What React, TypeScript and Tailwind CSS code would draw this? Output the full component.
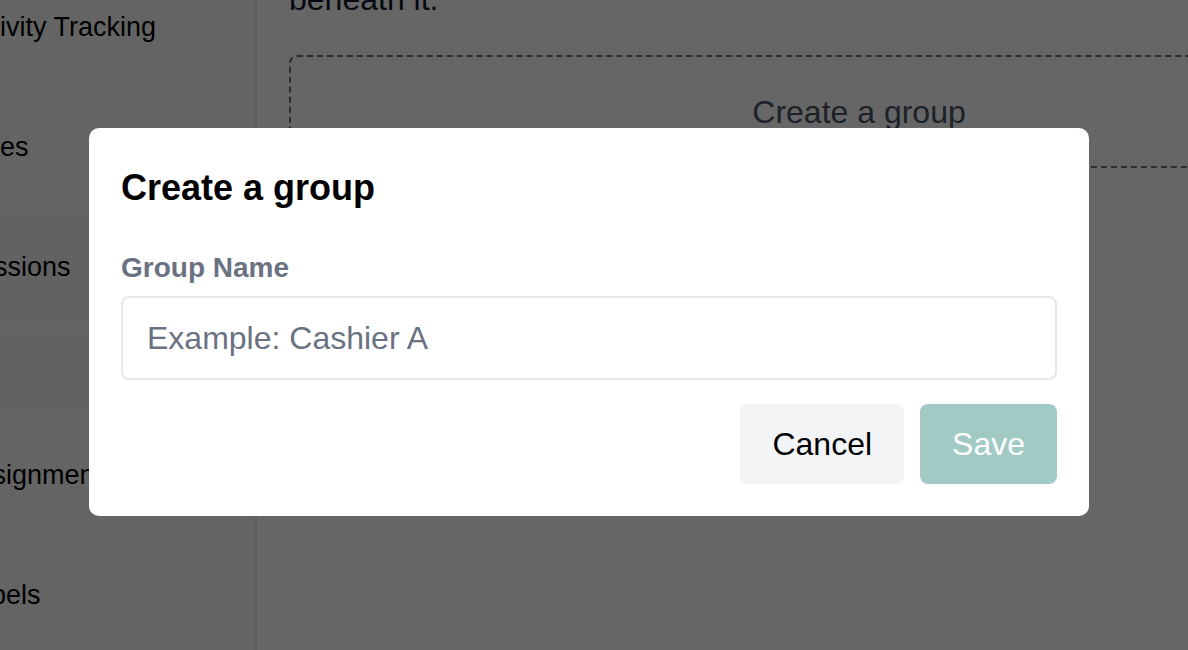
import React, { useState } from 'react';

const NAV = [
  { label: 'Activity Tracking', h: 'h-[120px]' },
  { label: 'Sales', h: 'h-[120px]' },
  { label: 'Sessions', h: 'h-[120px]', active: true },
  { label: '', h: 'h-[88px]', muted: true },
  { label: 'Assignments', h: 'h-[120px]' },
  { label: 'Labels', h: 'h-[120px]' },
];

const App: React.FC = () => {
  const [name, setName] = useState('');

  return (
    <div
      className="relative w-[1188px] h-[650px] overflow-hidden bg-white"
      style={{ fontFamily: '"Liberation Sans", Arial, sans-serif' }}
    >
      {/* page behind the dialog */}
      <div className="flex h-full">
        <aside className="w-[257px] shrink-0 bg-gray-50 border-r-2 border-gray-200 overflow-hidden">
          <div className="-mt-[33px] flex flex-col">
            {NAV.map((item, i) => (
              <div key={i} className={`${item.h} py-2 pr-2`}>
                <div
                  className={`h-full flex items-center rounded-r-lg ${
                    item.active ? 'bg-[#f4f4f4]' : item.muted ? 'bg-gray-100' : ''
                  }`}
                >
                  <span className="-ml-[39px] whitespace-nowrap text-[27px] leading-[40px] text-black">
                    {item.label}
                  </span>
                </div>
              </div>
            ))}
          </div>
        </aside>

        <main className="flex-1 overflow-hidden pl-8">
          <p className="-mt-[25px] text-[32px] leading-[48px] text-gray-900 whitespace-nowrap">beneath it.</p>
          <button className="mt-8 w-[1140px] h-[113px] shrink-0 rounded-lg border-2 border-dashed border-gray-500 flex items-center justify-center text-[32px] leading-[48px] text-gray-600">
            Create a group
          </button>
        </main>
      </div>

      {/* dialog */}
      <div className="absolute inset-0 bg-black/60 flex items-center justify-center pr-[10px] pb-[6px]">
        <div className="w-[1000px] bg-white rounded-[10px] p-8">
          <h2 className="text-[36px] leading-[56px] font-bold text-black">Create a group</h2>
          <label className="block mt-8 text-[28px] leading-[40px] font-bold text-gray-500">Group Name</label>
          <input
            value={name}
            onChange={e => setName(e.target.value)}
            placeholder="Example: Cashier A"
            className="mt-2 block w-full h-[84px] rounded-lg border-2 border-gray-200 px-6 text-[32px] leading-[48px] text-gray-900 placeholder:text-gray-500 outline-none"
          />
          <div className="mt-6 flex justify-end gap-4">
            <button className="h-20 px-8 rounded-lg bg-gray-100 text-[32px] leading-[48px] text-black">Cancel</button>
            <button className="h-20 px-8 rounded-lg bg-[#a2cac5] text-[32px] leading-[48px] text-white">Save</button>
          </div>
        </div>
      </div>
    </div>
  );
};

export default App;
